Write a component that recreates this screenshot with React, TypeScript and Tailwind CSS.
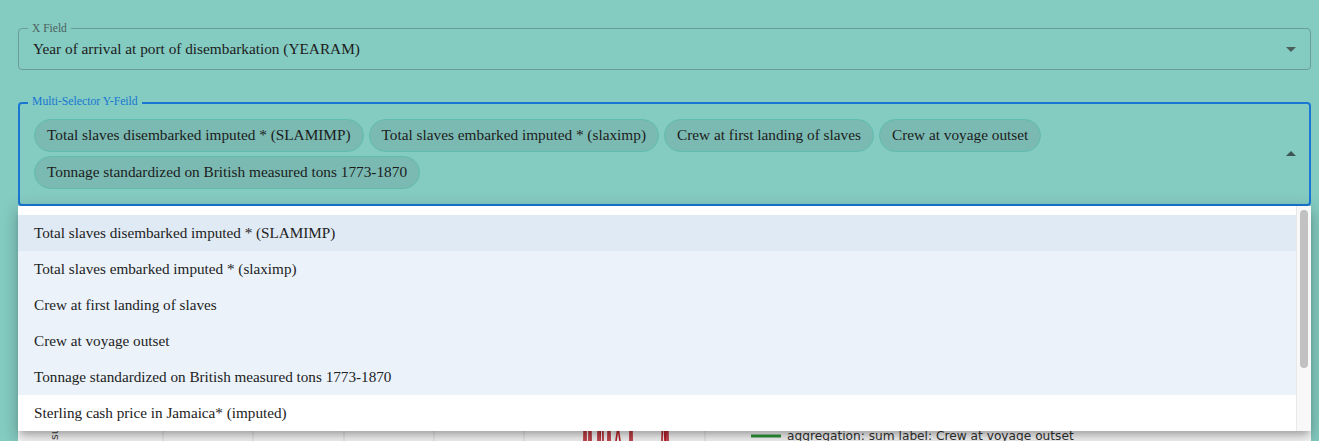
import { useState } from "react";

const options = [
  "Total slaves disembarked imputed * (SLAMIMP)",
  "Total slaves embarked imputed * (slaximp)",
  "Crew at first landing of slaves",
  "Crew at voyage outset",
  "Tonnage standardized on British measured tons 1773-1870",
  "Sterling cash price in Jamaica* (imputed)",
];

function ArrowDrop({ up, className }: { up?: boolean; className?: string }) {
  return (
    <svg viewBox="0 0 24 24" className={className} fill="currentColor">
      {up ? <path d="M7 14l5-5 5 5z" /> : <path d="M7 10l5 5 5-5z" />}
    </svg>
  );
}

function Chart() {
  const grid = [145, 235, 326, 416, 506, 597, 687];
  return (
    <svg width="1293" height="219" className="block">
      {grid.map((x) => (
        <line key={x} x1={x} y1={0} x2={x} y2={219} stroke="#e4e4e4" strokeWidth="1" />
      ))}
      <text
        x="0"
        y="0"
        fontSize="11"
        fill="#444"
        fontFamily="DejaVu Sans, sans-serif"
        transform="translate(40 218) rotate(-90)"
      >
        sum (100)
      </text>
      <path
        d="M566 219 L567 120 L568 219 M571 219 L572 130 L573 219 M580 219 L581 110 L582 219 L584 140 L585 219 M590 219 L591 125 L592 219 M598 219 L600 205 L602 219 M612 219 L613 100 L614 219 M644 219 L645 180 L647 219 M648 219 L649 150 L650 219"
        stroke="#c0202a"
        strokeWidth="1.6"
        fill="none"
      />
      <line x1="733" y1="214" x2="763" y2="214" stroke="#2e9a3a" strokeWidth="3" />
      <text x="769" y="218" fontSize="12.2" fill="#333" fontFamily="DejaVu Sans, sans-serif">
        aggregation: sum label: Crew at voyage outset
      </text>
    </svg>
  );
}

export default function App() {
  const [selected] = useState(options.slice(0, 5));

  return (
    <div
      className="h-[441px] w-full overflow-hidden bg-[#84cbc1] pl-[18px] pr-[8px] pt-[28px] text-[#1c1c1c]"
      style={{ fontFamily: '"Liberation Serif", "DejaVu Serif", serif' }}
    >
      {/* X field */}
      <div className="relative flex h-[42px] items-center rounded border border-[#6b9e97] pl-[14px] pr-[7px]">
        <span className="absolute -top-[8px] left-[9px] bg-[#84cbc1] px-1 text-[11.5px] leading-[14px] text-[#4b615e]">
          X Field
        </span>
        <span className="flex-1 text-[15.3px]">Year of arrival at port of disembarkation (YEARAM)</span>
        <ArrowDrop className="h-6 w-6 text-[#4a5f5c]" />
      </div>

      {/* Multi selector */}
      <div className="relative mt-[32px]">
        <div className="relative flex h-[104px] items-center rounded border-2 border-[#1976d2] pl-[14px] pr-[6px]">
          <span className="absolute -top-[9px] left-[8px] bg-[#84cbc1] px-1 text-[11.7px] leading-[14px] text-[#1976d2]">
            Multi-Selector Y-Feild
          </span>
          <div className="flex flex-1 flex-wrap gap-x-[5px] gap-y-[4px]">
            {selected.map((s) => (
              <span
                key={s}
                className="flex h-[33px] items-center rounded-full border border-[#5fbcb1] bg-[#7bbab2] px-[12px] text-[15.3px]"
              >
                {s}
              </span>
            ))}
          </div>
          <ArrowDrop up className="h-6 w-6 text-[#3e5553]" />
        </div>

        {/* dropdown menu */}
        <div className="absolute left-0 right-0 top-[104px] z-10 flex h-[225px] overflow-hidden bg-white shadow-[0_5px_6px_-3px_rgba(0,0,0,0.2),0_9px_12px_1px_rgba(0,0,0,0.14),0_3px_16px_2px_rgba(0,0,0,0.12)]">
          <ul className="flex-1 pt-[9px]">
            {options.map((o, i) => (
              <li
                key={o}
                className={
                  "flex h-[36px] items-center pl-4 text-[15.2px] text-[#222] " +
                  (i === 0 ? "bg-[#e0eaf4]" : i < 5 ? "bg-[#ebf2fa]" : "bg-white")
                }
              >
                {o}
              </li>
            ))}
          </ul>
          <div className="w-[15px] border-l border-[#e8e8e8] bg-[#f8f8f8] px-[3px] pt-[4px]">
            <div className="h-[158px] rounded-full bg-[#c1c1c1]" />
          </div>
        </div>
      </div>

      {/* chart panel behind the menu */}
      <div className="mt-[16px] bg-white">
        <Chart />
      </div>
    </div>
  );
}
